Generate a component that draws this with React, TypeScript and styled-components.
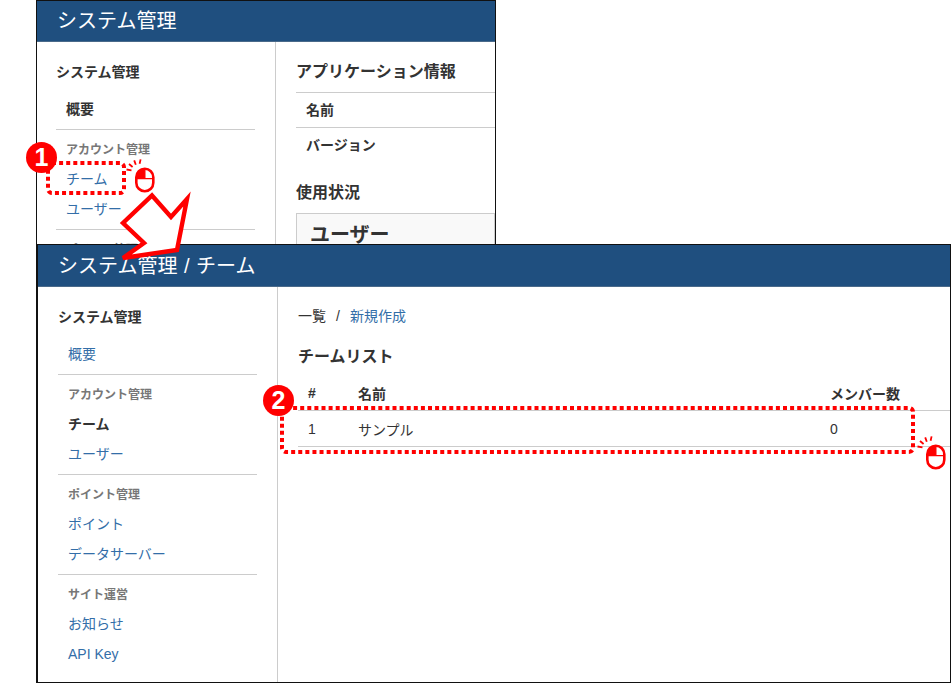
import styled, { createGlobalStyle } from 'styled-components'

const FONT = '"Liberation Sans", "Noto Sans CJK JP", sans-serif'
const LINK = '#336ea8'

const sideSections = [
  { label: 'アカウント管理', items: [{ text: 'チーム', active: true }, { text: 'ユーザー' }] },
  { label: 'ポイント管理', items: [{ text: 'ポイント' }, { text: 'データサーバー' }] },
  { label: 'サイト運営', items: [{ text: 'お知らせ' }, { text: 'API Key' }] }
]

function MouseIcon ({ x, y }: { x: number, y: number }): JSX.Element {
  return <Overlay width='32' height='36' viewBox='0 0 32 36' $x={x} $y={y}>
    <rect x='11.3' y='10.8' width='17' height='22.4' rx='8.5' fill='#fff' stroke='#f00' strokeWidth='2.6'/>
    <path d='M19.8 10.8a8.5 8.5 0 0 0-8.5 8.5V21h8.5Z' fill='#f00'/>
    <path d='M19.8 10.8V21M11.3 20.6H28.3' fill='none' stroke='#f00' strokeWidth='1.4'/>
    <path d='M1.5 11.5l5 .8M4 6l3.6 3M9.2 2.4l1.6 4.4M15.6 1.4l-1 4.4' fill='none' stroke='#f00' strokeWidth='1.8'/>
  </Overlay>
}

function DottedFrame ({ x, y, w, h }: { x: number, y: number, w: number, h: number }): JSX.Element {
  return <Overlay width={w + 6} height={h + 6} $x={x - 3} $y={y - 3}>
    <rect x='3' y='3' width={w} height={h} rx='4' fill='none' stroke='#f00' strokeWidth='4' strokeDasharray='4 3.1'/>
  </Overlay>
}

export default function App (): JSX.Element {
  return <Canvas>
    <GlobalStyle/>

    <Window $x={36} $y={0} $w={460} $h={245}>
      <Header>システム管理</Header>
      <Body>
        <Sidebar>
          <SideTitle>システム管理</SideTitle>
          <SideItem $active>概要</SideItem>
          <SideSection>
            <SideLabel>アカウント管理</SideLabel>
            <SideItem>チーム</SideItem>
            <SideItem>ユーザー</SideItem>
          </SideSection>
          <SideSection>
            <SideLabel>ポイント管理</SideLabel>
          </SideSection>
        </Sidebar>
        <Main>
          <AppHeading>アプリケーション情報</AppHeading>
          <InfoRow>名前</InfoRow>
          <InfoRow>バージョン</InfoRow>
          <UsageHeading>使用状況</UsageHeading>
          <UsageCard>ユーザー</UsageCard>
        </Main>
      </Body>
    </Window>

    <Window $x={36} $y={244} $w={915} $h={439} $wide>
      <Header $wide>システム管理 / チーム</Header>
      <Body $wide>
        <Sidebar>
          <SideTitle>システム管理</SideTitle>
          <SideItem>概要</SideItem>
          {sideSections.map(section => <SideSection key={section.label}>
            <SideLabel>{section.label}</SideLabel>
            {section.items.map(item => <SideItem key={item.text} $active={item.active}>{item.text}</SideItem>)}
          </SideSection>)}
        </Sidebar>
        <Main>
          <Breadcrumb>一覧<Slash>/</Slash><BlueLink>新規作成</BlueLink></Breadcrumb>
          <ListHeading>チームリスト</ListHeading>
          <TeamTable>
            <thead>
              <tr><th>#</th><th>名前</th><th>メンバー数</th></tr>
            </thead>
            <tbody>
              <tr><td>1</td><td>サンプル</td><td>0</td></tr>
            </tbody>
          </TeamTable>
        </Main>
      </Body>
    </Window>

    <DottedFrame x={48} y={163} w={76} h={30}/>
    <DottedFrame x={282} y={408} w={631} h={44}/>
    <Badge $x={26} $y={142}>1</Badge>
    <Badge $x={263} $y={385}>2</Badge>
    <MouseIcon x={125} y={158}/>
    <MouseIcon x={916} y={435}/>
    <Overlay width='80' height='76' viewBox='0 0 80 76' $x={115} $y={190}>
      <path d='M37 5.5L56 27L72 9L62 60L8 68L29 53L8 33Z' fill='#fff' stroke='#f00' strokeWidth='4.4'/>
    </Overlay>
  </Canvas>
}

const GlobalStyle = createGlobalStyle`
  html, body {
    margin: 0;
    background: #fff;
  }
`

const Canvas = styled.div`
  position: relative;
  width: 951px;
  height: 683px;
  overflow: hidden;
  font-family: ${FONT};
  font-size: 14px;
  color: #333;
`

const Window = styled.section<{ $x: number, $y: number, $w: number, $h: number, $wide?: boolean }>`
  position: absolute;
  left: ${p => p.$x}px;
  top: ${p => p.$y}px;
  width: ${p => p.$w}px;
  height: ${p => p.$h}px;
  box-sizing: border-box;
  border: 1px solid #111;
  border-left-width: ${p => p.$wide ? 2 : 1}px;
  background: #fff;
  overflow: hidden;
  display: flex;
  flex-direction: column;
`

const Header = styled.header<{ $wide?: boolean }>`
  flex: none;
  height: ${p => p.$wide ? 42 : 41}px;
  padding-left: 20px;
  background: #1f4f7f;
  border-bottom: 1px solid #4a6a8a;
  box-sizing: border-box;
  color: #fff;
  font-size: 20px;
  line-height: ${p => p.$wide ? 42 : 41}px;
  word-spacing: 1px;
`

const Body = styled.div<{ $wide?: boolean }>`
  flex: 1;
  display: flex;
  min-height: 0;
  padding-left: ${p => p.$wide ? 1 : 0}px;
`

const Sidebar = styled.nav`
  flex: none;
  width: 239px;
  box-sizing: border-box;
  padding: 20px 20px 0 19px;
  border-right: 1px solid #ccc;
`

const SideTitle = styled.div`
  height: 20px;
  font-size: 14px;
  font-weight: bold;
  line-height: 20px;
  margin-bottom: 12px;
`

const SideItem = styled.div<{ $active?: boolean }>`
  height: 30px;
  padding-left: 10px;
  font-size: 14px;
  line-height: 30px;
  font-weight: ${p => p.$active ? 'bold' : 'normal'};
  color: ${p => p.$active ? '#333' : LINK};
`

const SideSection = styled.div`
  margin-top: 5px;
  border-top: 1px solid #ccc;
  padding-top: 10px;
`

const SideLabel = styled.div`
  height: 20px;
  padding-left: 10px;
  margin-bottom: 4px;
  font-size: 12px;
  font-weight: bold;
  line-height: 20px;
  color: #777;
`

const Main = styled.main`
  flex: 1;
  min-width: 0;
  padding: 20px 0 0 20px;
`

const AppHeading = styled.h2`
  margin: 0 0 10px;
  font-size: 16px;
  line-height: 20px;
  font-weight: bold;
`

const InfoRow = styled.div`
  height: 35px;
  padding-left: 10px;
  border-top: 1px solid #ccc;
  box-sizing: border-box;
  font-weight: bold;
  line-height: 34px;
  &:nth-of-type(3) {
    border-bottom: 1px solid #ccc;
    height: 36px;
  }
`

const UsageHeading = styled.h3`
  margin: 20px 0 9px;
  font-size: 16px;
  line-height: 22px;
  font-weight: bold;
`

const UsageCard = styled.div`
  height: 40px;
  padding-left: 13px;
  border: 1px solid #ccc;
  background: #f9f9f9;
  font-size: 20px;
  font-weight: bold;
  line-height: 42px;
`

const Breadcrumb = styled.div`
  height: 20px;
  line-height: 18px;
  font-size: 14px;
`

const Slash = styled.span`
  margin: 0 10px;
`

const BlueLink = styled.span`
  color: ${LINK};
`

const ListHeading = styled.h2`
  margin: 20px 0 9px;
  font-size: 16px;
  line-height: 20px;
  font-weight: bold;
`

const TeamTable = styled.table`
  width: 100%;
  border-collapse: collapse;
  table-layout: fixed;
  th, td {
    padding: 0 10px;
    text-align: left;
    font-size: 14px;
  }
  th {
    height: 34px;
    font-weight: bold;
    border-bottom: 1px solid #ccc;
  }
  td {
    height: 35px;
    border-bottom: 1px solid #ccc;
  }
  th:nth-child(1), td:nth-child(1) { width: 30px; }
  th:nth-child(2), td:nth-child(2) { width: 452px; }
`

const Badge = styled.div<{ $x: number, $y: number }>`
  position: absolute;
  left: ${p => p.$x}px;
  top: ${p => p.$y}px;
  width: 31px;
  height: 31px;
  border-radius: 50%;
  background: #f00;
  color: #fff;
  font-family: "Liberation Sans", sans-serif;
  font-size: 25px;
  font-weight: bold;
  line-height: 31px;
  text-align: center;
`

const Overlay = styled.svg<{ $x: number, $y: number }>`
  position: absolute;
  left: ${p => p.$x}px;
  top: ${p => p.$y}px;
`
